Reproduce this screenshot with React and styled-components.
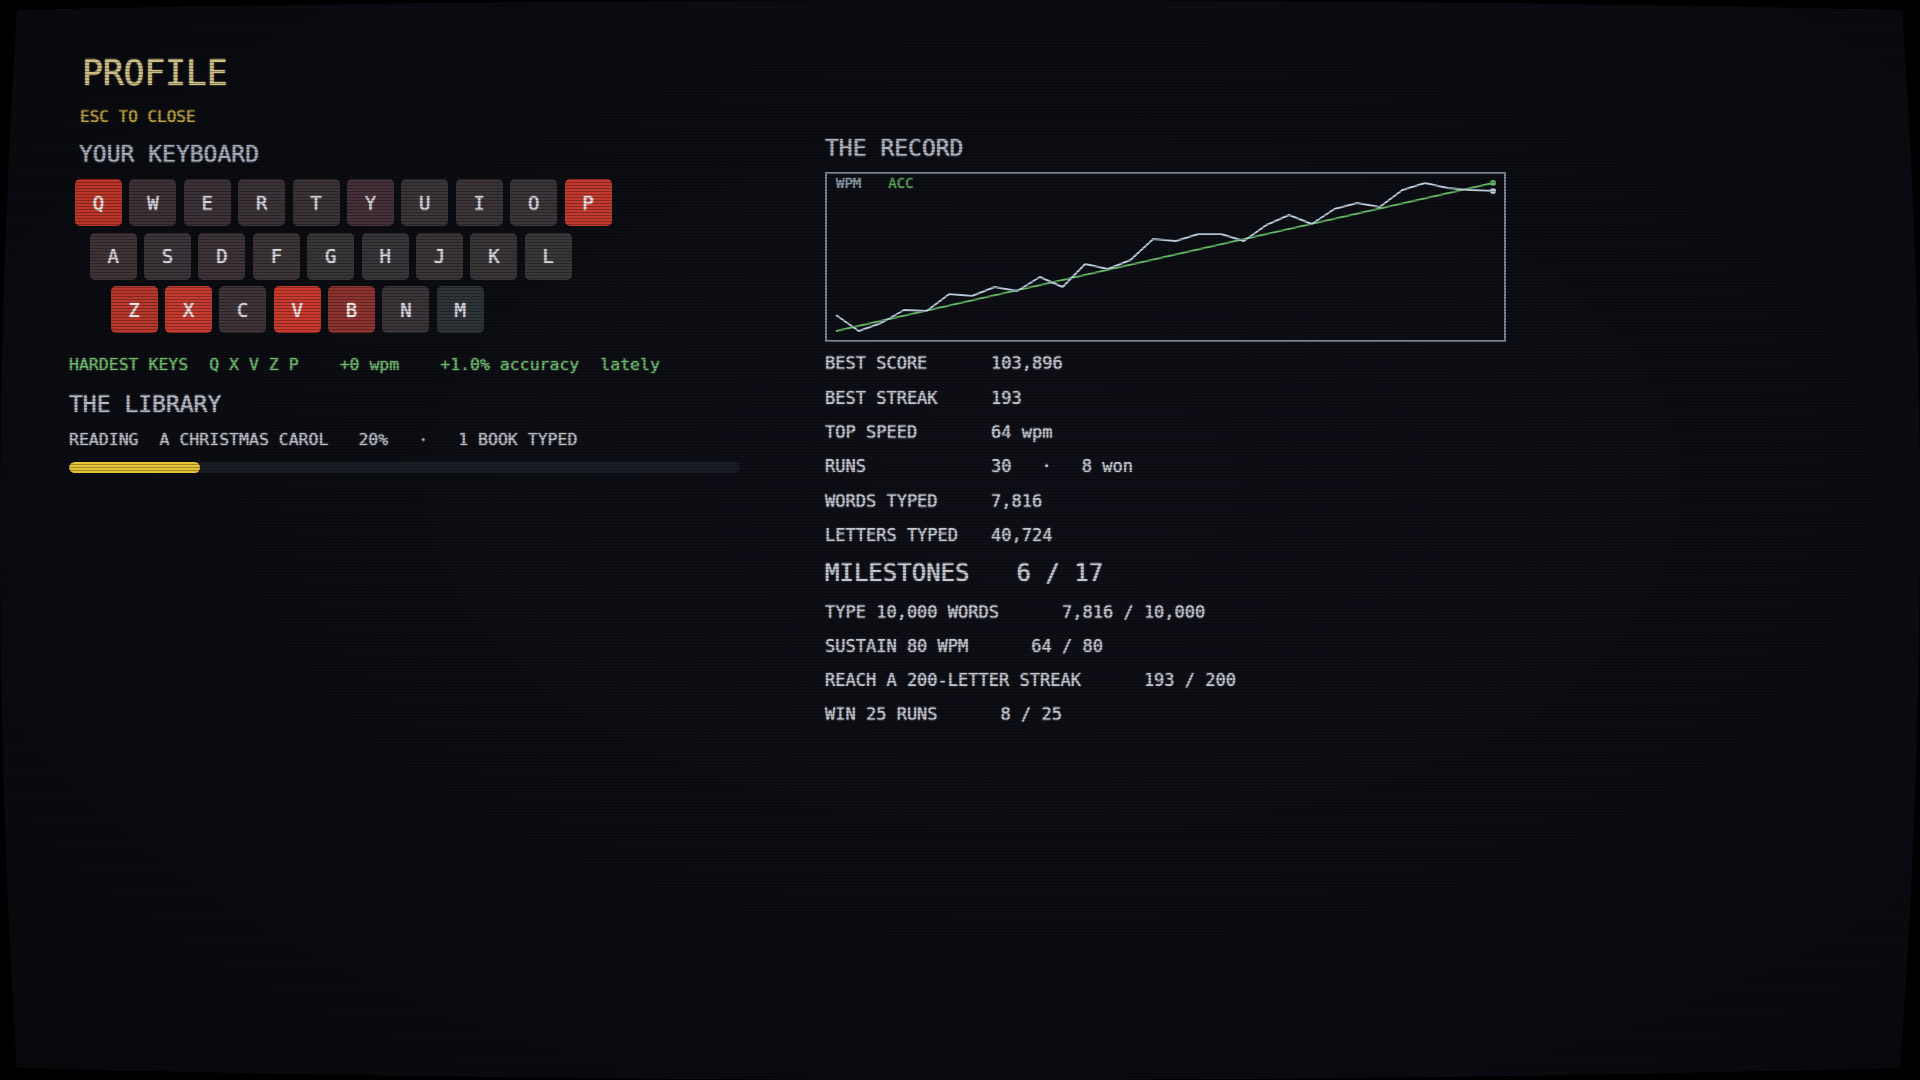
import React from "react";
import styled, { createGlobalStyle } from "styled-components";

const GlobalStyle = createGlobalStyle`
  html, body {
    margin: 0;
    padding: 0;
    background: #000;
  }
  body {
    font-family: "DejaVu Sans Mono", "Liberation Mono", monospace;
    overflow: hidden;
  }
`;

// the tube: a bulged screen with pinched corners
const Screen = styled.div`
  position: relative;
  width: 1920px;
  height: 1080px;
  overflow: hidden;
  background: radial-gradient(ellipse at 55% 45%, #0f1017 0%, #0c0d13 55%, #08090d 100%);
  clip-path: path("M 17 10 Q 960 -10 1902 10 Q 1939 540 1900 1068 Q 960 1092 17 1068 Q -17 540 17 10 Z");
  text-shadow: 0 0 1.5px;
`;

const Scanlines = styled.div`
  position: absolute;
  inset: 0;
  pointer-events: none;
  background: repeating-linear-gradient(
    to bottom,
    transparent 0 2px,
    rgba(0, 0, 0, 0.3) 2px 3px
  );
`;

const Layout = styled.div`
  display: flex;
  gap: 85px;
  padding: 52px 0 0 69px;
`;

const LeftColumn = styled.div`
  display: flex;
  flex-direction: column;
  width: 671px;
`;

const RightColumn = styled.div`
  display: flex;
  flex-direction: column;
  padding-top: 82px;
`;

const Title = styled.h1`
  margin: 0 0 0 13px;
  font-size: 35px;
  line-height: 42px;
  font-weight: 400;
  letter-spacing: -0.3px;
  color: #cdbf86;
`;

const Hint = styled.div`
  margin: 12.6px 0 0 11px;
  font-size: 16px;
  line-height: 20px;
  color: #b9a03c;
`;

const SectionTitle = styled.h2`
  margin: ${(p) => p.$top || 0}px 0 0 ${(p) => p.$left || 0}px;
  font-size: ${(p) => p.$size || 23}px;
  line-height: ${(p) => (p.$size ? p.$size + 6 : 28)}px;
  font-weight: 400;
  color: ${(p) => p.$color || "#b4b9c3"};
  display: flex;
  gap: 47px;
`;

const Keyboard = styled.div`
  display: flex;
  flex-direction: column;
  gap: 6.5px;
  margin: 11px 0 0 6px;
`;

const KeyRow = styled.div`
  display: flex;
  gap: 7.4px;
  padding-left: ${(p) => p.$indent}px;
`;

const Key = styled.div`
  width: 47px;
  height: 47px;
  border-radius: 5px;
  display: flex;
  align-items: center;
  justify-content: center;
  font-size: 19px;
  background: ${(p) => p.$bg};
  color: ${(p) => (p.$hot ? "#f3e9e6" : "#d6d6dc")};
`;

const HardestLine = styled.div`
  display: flex;
  gap: 41px;
  margin-top: 21.5px;
  font-size: 16.5px;
  line-height: 20px;
  color: #6eb96e;
`;

const Group = styled.span`
  display: flex;
  gap: 21px;
`;

const ReadingLine = styled.div`
  display: flex;
  gap: 30px;
  margin-top: 12px;
  font-size: 16.5px;
  line-height: 20px;
  color: #b9bcc3;

  & > span:first-child {
    margin-right: -9px;
  }
`;

const Track = styled.div`
  margin-top: 12px;
  height: 11px;
  border-radius: 6px;
  background: #1b1d26;
  overflow: hidden;
`;

const Fill = styled.div`
  height: 100%;
  border-radius: 6px;
  background: #e6c439;
`;

const ChartBox = styled.div`
  position: relative;
  margin-top: 10px;
  width: 681px;
  height: 170px;
  box-sizing: border-box;
  border: 2px solid #7f8499;

  svg {
    display: block;
  }
`;

const Legend = styled.div`
  position: absolute;
  top: 1px;
  left: 9px;
  display: flex;
  gap: 27px;
  font-size: 14px;
  line-height: 16px;
`;

const LegendItem = styled.span`
  color: ${(p) => p.$color};
`;

const List = styled.div`
  margin-top: ${(p) => p.$top}px;
  display: flex;
  flex-direction: column;
`;

const StatRow = styled.div`
  display: flex;
  font-size: 17px;
  line-height: 34.3px;
  color: #c2c6ce;
  gap: ${(p) => p.$gap || 0}px;
`;

const StatLabel = styled.span`
  width: 166px;
  flex-shrink: 0;
`;

const StatValue = styled.span`
  display: flex;
  gap: 30px;
`;

const rows = [
  "QWERTYUIOP".split(""),
  "ASDFGHJKL".split(""),
  "ZXCVBNM".split(""),
];
const indents = [0, 14.7, 35.5];

// heat per key: stronger red for the keys that trip you up
const keyColors = {
  Q: "#bb3529", W: "#3c3135", E: "#3a3236", R: "#3b3337", T: "#3a3437",
  Y: "#46313a", U: "#3a3538", I: "#3b3538", O: "#3a3538", P: "#c23a2f",
  A: "#403337", S: "#3b3539", D: "#3d3437", F: "#3b3538", G: "#393638",
  H: "#383639", J: "#3b3538", K: "#3a3638", L: "#3a3739",
  Z: "#b8382e", X: "#c63b2f", C: "#3f3437", V: "#c93a2e", B: "#8d3430",
  N: "#3a3538", M: "#2e3338",
};
const hotKeys = ["Q", "P", "Z", "X", "V", "B"];

const wpm = [141, 157, 149, 136, 137, 120, 122, 113, 117, 103, 113, 90, 95, 86, 65,
  67, 60, 60, 67, 51, 41, 50, 35, 29, 33, 16, 9, 14, 16, 17];
const step = (666 - 9) / (wpm.length - 1);
const wpmPoints = wpm.map((y, i) => `${(9 + i * step).toFixed(1)},${y}`).join(" ");

const stats = [
  ["BEST SCORE", ["103,896"]],
  ["BEST STREAK", ["193"]],
  ["TOP SPEED", ["64 wpm"]],
  ["RUNS", ["30", "·", "8 won"]],
  ["WORDS TYPED", ["7,816"]],
  ["LETTERS TYPED", ["40,724"]],
];

const milestones = [
  ["TYPE 10,000 WORDS", "7,816 / 10,000"],
  ["SUSTAIN 80 WPM", "64 / 80"],
  ["REACH A 200-LETTER STREAK", "193 / 200"],
  ["WIN 25 RUNS", "8 / 25"],
];

const Chart = () => (
  <ChartBox>
    <Legend>
      <LegendItem $color="#8d9cab">WPM</LegendItem>
      <LegendItem $color="#5aa65a">ACC</LegendItem>
    </Legend>
    <svg viewBox="0 0 677 166" width="677" height="166">
      <line x1="9" y1="157" x2="666" y2="9" stroke="#63b563" strokeWidth="2" />
      <polyline points={wpmPoints} fill="none" stroke="#b5c8da" strokeWidth="2" strokeLinejoin="round" />
      <circle cx="666" cy="9" r="3" fill="#63b563" />
      <circle cx="666" cy="17" r="3" fill="#b5c8da" />
    </svg>
  </ChartBox>
);

const App = () => {
  const progress = 19.5;
  return (
    <>
      <GlobalStyle />
      <Screen>
        <Layout>
          <LeftColumn>
            <Title>PROFILE</Title>
            <Hint>ESC TO CLOSE</Hint>
            <SectionTitle $top={13.8} $left={10} $color="#a5acb9">YOUR KEYBOARD</SectionTitle>
            <Keyboard>
              {rows.map((row, r) => (
                <KeyRow key={r} $indent={indents[r]}>
                  {row.map((k) => (
                    <Key key={k} $bg={keyColors[k]} $hot={hotKeys.includes(k)}>{k}</Key>
                  ))}
                </KeyRow>
              ))}
            </Keyboard>
            <HardestLine>
              <Group>
                <span>HARDEST KEYS</span>
                <span>Q X V Z P</span>
              </Group>
              <span>+0 wpm</span>
              <Group>
                <span>+1.0% accuracy</span>
                <span>lately</span>
              </Group>
            </HardestLine>
            <SectionTitle $top={15}>THE LIBRARY</SectionTitle>
            <ReadingLine>
              <span>READING</span>
              <span>A CHRISTMAS CAROL</span>
              <span>20%</span>
              <span>·</span>
              <span>1 BOOK TYPED</span>
            </ReadingLine>
            <Track>
              <Fill style={{ width: `${progress}%` }} />
            </Track>
          </LeftColumn>

          <RightColumn>
            <SectionTitle $color="#b0b5bf">THE RECORD</SectionTitle>
            <Chart />
            <List $top={4.4}>
              {stats.map(([label, parts]) => (
                <StatRow key={label}>
                  <StatLabel>{label}</StatLabel>
                  <StatValue>
                    {parts.map((p, i) => <span key={i}>{p}</span>)}
                  </StatValue>
                </StatRow>
              ))}
            </List>
            <SectionTitle $top={6} $size={24} $color="#c4c8d0">
              <span>MILESTONES</span>
              <span>6 / 17</span>
            </SectionTitle>
            <List $top={6.4}>
              {milestones.map(([label, value]) => (
                <StatRow key={label} $gap={63}>
                  <span>{label}</span>
                  <span>{value}</span>
                </StatRow>
              ))}
            </List>
          </RightColumn>
        </Layout>
        <Scanlines />
      </Screen>
    </>
  );
};

export default App;
